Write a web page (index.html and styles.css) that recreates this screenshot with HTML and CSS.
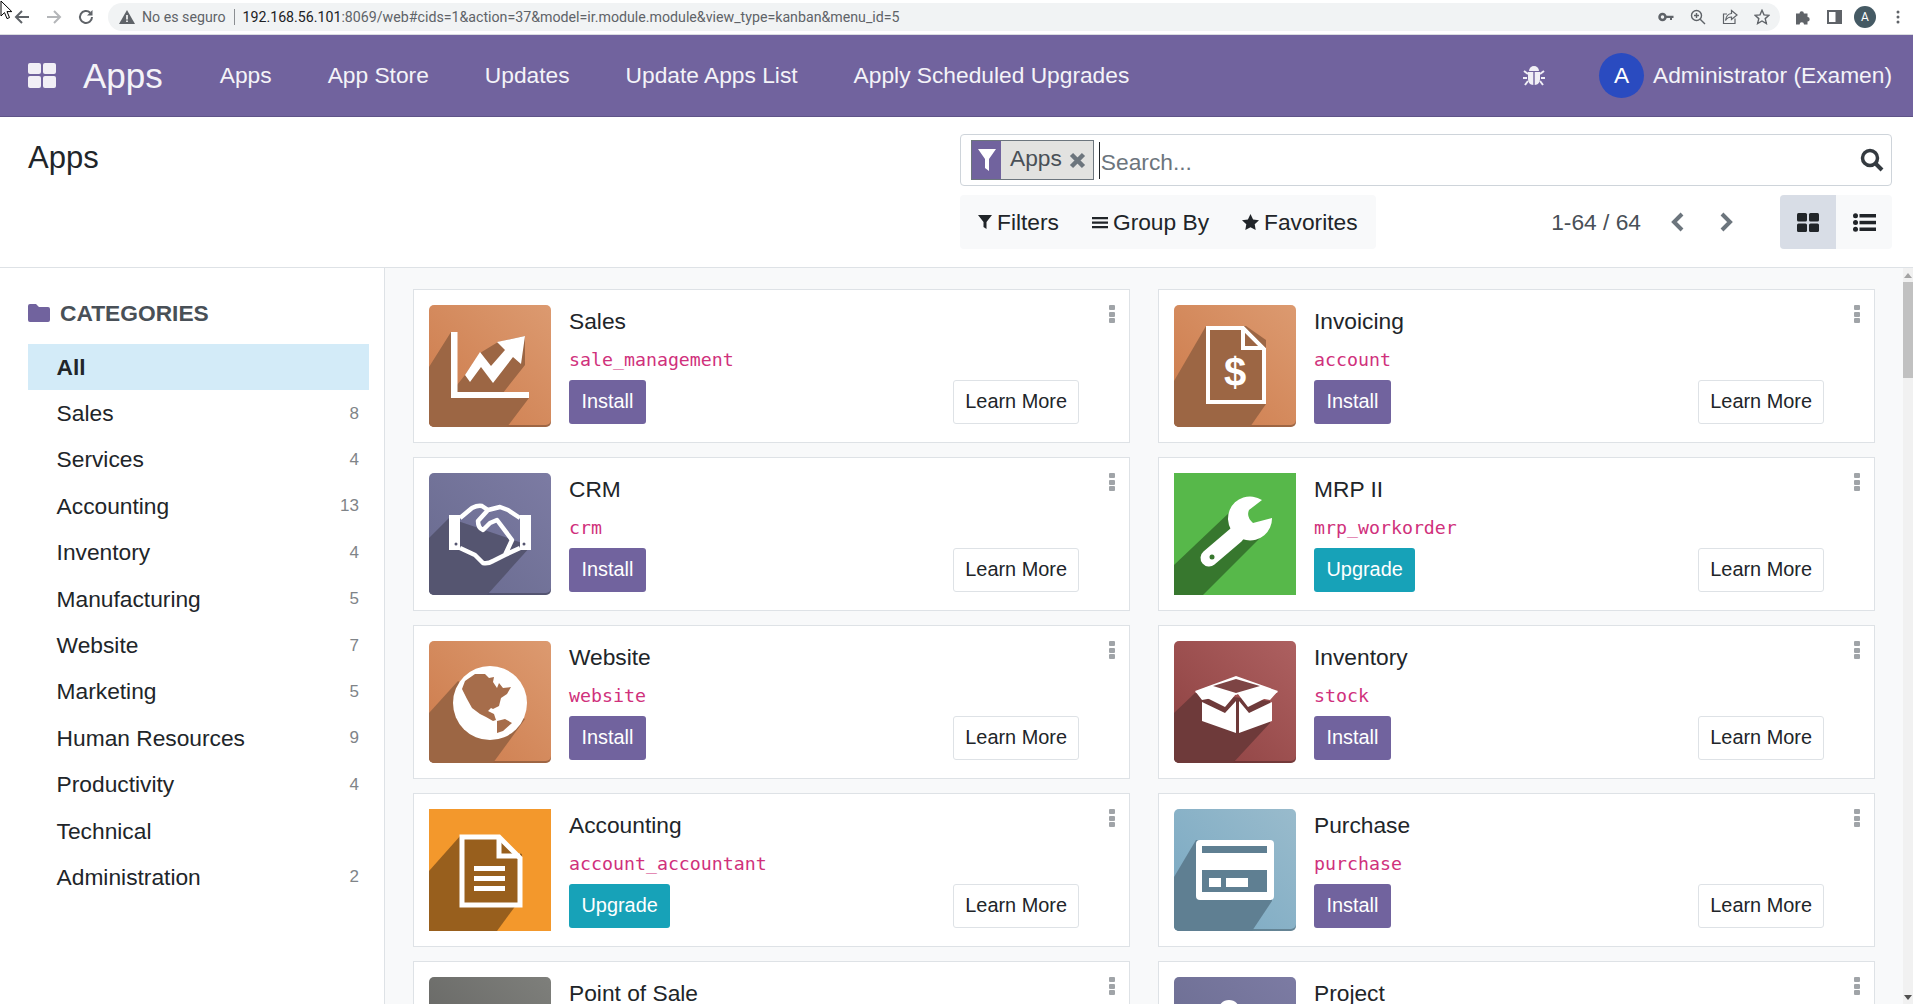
FILE: index.html
```html
<!DOCTYPE html>
<html lang="en">
  <head>
    <meta charset="UTF-8" />
    <title>Apps - Odoo</title>
    <link rel="stylesheet" href="styles.css">
  </head>
  <body>
    <svg class="mouse-cursor" width="12" height="20" viewBox="0 0 12 20"><path d="M1 1v15l3.500-3.400 2.500 6 2.500-1-2.500-6h4.800z" fill="#fff" stroke="#000" stroke-width="1"/></svg>

    <!-- browser toolbar -->
    <div class="browser-bar">
      <div class="browser-nav">
        <svg width="18" height="18" viewBox="0 0 18 18"><path d="M16 9H3M9 3L3 9l6 6" fill="none" stroke="#5f6368" stroke-width="2"/></svg>
        <svg width="18" height="18" viewBox="0 0 18 18"><path d="M2 9h13M9 3l6 6-6 6" fill="none" stroke="#b4b6b9" stroke-width="2"/></svg>
        <svg width="18" height="18" viewBox="0 0 18 18"><path d="M15 9a6 6 0 1 1-1.800-4.300" fill="none" stroke="#5f6368" stroke-width="2"/><path d="M15.500 2v5.500H10z" fill="#5f6368"/></svg>
      </div>
      <div class="address-bar">
        <svg class="warn-icon" width="16" height="14" viewBox="0 0 16 14"><path d="M8 0l8 14H0z" fill="#5f6368"/><path d="M7.200 5h1.600v4.500H7.200zM7.200 10.500h1.600V12H7.200z" fill="#fff"/></svg>
        <span class="not-secure">No es seguro</span>
        <span class="address-sep"></span>
        <span class="url"><b>192.168.56.101</b>:8069/web#cids=1&amp;action=37&amp;model=ir.module.module&amp;view_type=kanban&amp;menu_id=5</span>
        <div class="address-icons">
          <svg width="16" height="16" viewBox="0 0 16 16"><circle cx="4.500" cy="8" r="3" fill="none" stroke="#5f6368" stroke-width="2.500"/><path d="M7 6.800h8.500v2.200h-1.500v2h-2V9H7z" fill="#5f6368"/></svg>
          <svg width="16" height="16" viewBox="0 0 16 16"><circle cx="6.500" cy="6.500" r="5" fill="none" stroke="#5f6368" stroke-width="1.400"/><path d="M10.200 10.200L15 15M4 6.500h5M6.500 4v5" fill="none" stroke="#5f6368" stroke-width="1.400"/></svg>
          <svg width="16" height="16" viewBox="0 0 16 16"><path d="M13 9.500V14.500H1.500V5H5" fill="none" stroke="#5f6368" stroke-width="1.200"/><path d="M9.500 1.500L15 6l-5.500 4.500V8C7 8 5 9 3.500 11.500 4 7.500 6 4.800 9.500 4.500z" fill="none" stroke="#5f6368" stroke-width="1.200"/></svg>
          <svg width="16" height="16" viewBox="0 0 16 16"><path d="M8 1.300l2 4.600 5 .4-3.800 3.300 1.200 4.900L8 12l-4.400 2.500 1.200-4.900L1 6.300l5-.4z" fill="none" stroke="#5f6368" stroke-width="1.400"/></svg>
        </div>
      </div>
      <div class="browser-actions">
        <svg width="16" height="16" viewBox="0 0 16 16"><path d="M1 4.500h3.500a2.200 2.200 0 1 1 4.400 0H12.500V8a2.200 2.200 0 1 1 0 4.400V15.500H9a2.200 2.200 0 1 0-4.400 0H1z" fill="#5f6368"/></svg>
        <svg width="15" height="14" viewBox="0 0 15 14"><path d="M0 0h15v14H0z" fill="#5f6368"/><path d="M2 2h6.500v10H2z" fill="#fff"/></svg>
        <span class="chrome-avatar">A</span>
        <svg width="4" height="14" viewBox="0 0 4 14"><circle cx="2" cy="2" r="1.500" fill="#5f6368"/><circle cx="2" cy="7" r="1.500" fill="#5f6368"/><circle cx="2" cy="12" r="1.500" fill="#5f6368"/></svg>
      </div>
    </div>

    <!-- odoo navbar -->
    <nav class="navbar">
      <svg class="apps-grid" width="28" height="25" viewBox="0 0 28 25"><rect width="13" height="11" rx="2"/><rect x="15" width="13" height="11" rx="2"/><rect y="13" width="13" height="12" rx="2"/><rect x="15" y="13" width="13" height="12" rx="2"/></svg>
      <span class="brand">Apps</span>
      <a class="nav-link">Apps</a>
      <a class="nav-link">App Store</a>
      <a class="nav-link">Updates</a>
      <a class="nav-link">Update Apps List</a>
      <a class="nav-link">Apply Scheduled Upgrades</a>
      <svg class="bug-icon" width="22" height="21" viewBox="0 0 22 21"><path d="M6 6a5 5 0 0 1 10 0z" fill="#f1eff6"/><path d="M5 7h5.300v13C7 20 5 17 5 14zM17 7h-5.300v13C15 20 17 17 17 14z" fill="#f1eff6"/><path d="M5 9L1 6M17 9l4-3M4 13H0M18 13h4M5 16l-3 4M17 16l3 4" stroke="#f1eff6" stroke-width="2"/></svg>
      <span class="user-avatar">A</span>
      <span class="user-name">Administrator (Examen)</span>
    </nav>

    <!-- control panel -->
    <div class="control-panel">
      <h1 class="page-title">Apps</h1>
      <div class="panel-right">
        <div class="search-box">
          <div class="facet">
            <span class="facet-icon"><svg width="18" height="24" viewBox="0 0 18 24"><path d="M0 1h18l-7 10v12l-4-3V11z" fill="#fff"/></svg></span>
            <span class="facet-label">Apps</span>
            <svg class="facet-close" width="17" height="17" viewBox="0 0 17 17"><path d="M2.500 2.500l12 12M14.500 2.500l-12 12" stroke="#6c757d" stroke-width="4.500"/></svg>
          </div>
          <span class="search-input">Search...</span>
          <svg class="search-icon" width="24" height="24" viewBox="0 0 24 24"><circle cx="10" cy="10" r="7.500" fill="none" stroke="#343a40" stroke-width="3.500"/><path d="M15.500 15.500L22 22" stroke="#343a40" stroke-width="4"/></svg>
        </div>
        <div class="panel-tools">
          <div class="filter-bar">
            <span class="filter-item"><svg width="14" height="16" viewBox="0 0 14 16"><path d="M0 1h14L8.500 8v7l-3-2V8z" fill="#212529"/></svg>Filters</span>
            <span class="filter-item"><svg width="16" height="14" viewBox="0 0 16 14"><path d="M0 2h16v2.200H0zM0 6.500h16v2.200H0zM0 11h16v2.200H0z" fill="#212529"/></svg>Group By</span>
            <span class="filter-item"><svg width="17" height="16" viewBox="0 0 17 16"><path d="M8.500 0l2.600 5.400 5.900.8-4.300 4.100 1 5.700-5.200-2.800L3.300 16l1-5.700L0 6.200l5.900-.8z" fill="#212529"/></svg>Favorites</span>
          </div>
          <span class="pager-text">1-64 / 64</span>
          <svg class="pager-arrow" width="15" height="20" viewBox="0 0 15 20"><path d="M12 2L4 10l8 8" fill="none" stroke="#6c757d" stroke-width="4"/></svg>
          <svg class="pager-arrow" width="15" height="20" viewBox="0 0 15 20"><path d="M3 2l8 8-8 8" fill="none" stroke="#6c757d" stroke-width="4"/></svg>
          <div class="view-switch">
            <span class="view-btn active"><svg width="22" height="19" viewBox="0 0 22 19"><rect width="10" height="8.500" rx="1.500"/><rect x="12" width="10" height="8.500" rx="1.500"/><rect y="10.500" width="10" height="8.500" rx="1.500"/><rect x="12" y="10.500" width="10" height="8.500" rx="1.500"/></svg></span>
            <span class="view-btn"><svg width="23" height="19" viewBox="0 0 23 19"><circle cx="2.500" cy="2.800" r="2.500"/><circle cx="2.500" cy="9.500" r="2.500"/><circle cx="2.500" cy="16.200" r="2.500"/><rect x="6.500" y="1" width="16.500" height="3.500"/><rect x="6.500" y="7.800" width="16.500" height="3.500"/><rect x="6.500" y="14.500" width="16.500" height="3.500"/></svg></span>
          </div>
        </div>
      </div>
    </div>

    <div class="content">
      <aside class="sidebar">
        <div class="side-header">
          <svg width="22" height="18" viewBox="0 0 22 18"><path d="M0 2a2 2 0 0 1 2-2h6l3 3h9a2 2 0 0 1 2 2v11a2 2 0 0 1-2 2H2a2 2 0 0 1-2-2z" fill="#71639e"/></svg>
          CATEGORIES
        </div>
        <ul class="cat-list">
          <li class="cat active">All</li>
          <li class="cat">Sales<span class="count">8</span></li>
          <li class="cat">Services<span class="count">4</span></li>
          <li class="cat">Accounting<span class="count">13</span></li>
          <li class="cat">Inventory<span class="count">4</span></li>
          <li class="cat">Manufacturing<span class="count">5</span></li>
          <li class="cat">Website<span class="count">7</span></li>
          <li class="cat">Marketing<span class="count">5</span></li>
          <li class="cat">Human Resources<span class="count">9</span></li>
          <li class="cat">Productivity<span class="count">4</span></li>
          <li class="cat">Technical</li>
          <li class="cat">Administration<span class="count">2</span></li>
        </ul>
      </aside>

      <main class="kanban">
        <div class="card">
          <div class="app-icon orange">
            <svg viewBox="0 0 122 122"><path d="M22 27L0 62v60h78l22-29H28V80l8-10 15-22 18-11 27-6v29L70 93H28z" fill="#9c6644"/><path d="M22 27h6.500v60H100v6H22z" fill="#fff"/><path d="M36 70l15-23 11 14 14-16-8-8 28-6-4 28-8-7-20 26-12-16-11 15z" fill="#fff"/></svg>
          </div>
          <div class="card-body">
            <h4 class="app-name">Sales</h4>
            <code class="app-tech">sale_management</code>
            <div class="card-actions"><button class="btn install">Install</button><button class="btn learn">Learn More</button></div>
          </div>
          <span class="card-menu"></span>
        </div>

        <div class="card">
          <div class="app-icon orange">
            <svg viewBox="0 0 122 122"><path d="M32 21L0 76v46h76l16-23V35L72 21z" fill="#9c6644"/><path d="M34 23h35l21 21v53H34z" fill="none" stroke="#fff" stroke-width="4"/><path d="M69 23v20h21" fill="none" stroke="#fff" stroke-width="4"/><text class="icon-dollar" x="61" y="81">$</text></svg>
          </div>
          <div class="card-body">
            <h4 class="app-name">Invoicing</h4>
            <code class="app-tech">account</code>
            <div class="card-actions"><button class="btn install">Install</button><button class="btn learn">Learn More</button></div>
          </div>
          <span class="card-menu"></span>
        </div>

        <div class="card">
          <div class="app-icon slate">
            <svg viewBox="0 0 122 122"><path d="M20 45L0 65v57h58l44-49z" fill="#555570"/><path d="M31 45l12-10q6-3 10-2l6 4 12-3 8 3 12 8M31 75l15 7 8 8q5 1 10-2l12-6 15-7M59 37L49 48q0 7 5 9l7-7 7-3 15 20-7 15" fill="none" stroke="#fff" stroke-width="4.500" stroke-linejoin="round"/><path d="M20 42h11v35H20zM91 42h11v35H91z" fill="#fff"/><circle cx="27" cy="71" r="1.500" fill="#555570"/><circle cx="95" cy="71" r="1.500" fill="#555570"/></svg>
          </div>
          <div class="card-body">
            <h4 class="app-name">CRM</h4>
            <code class="app-tech">crm</code>
            <div class="card-actions"><button class="btn install">Install</button><button class="btn learn">Learn More</button></div>
          </div>
          <span class="card-menu"></span>
        </div>

        <div class="card">
          <div class="app-icon green">
            <svg viewBox="0 0 122 122"><path d="M58 37L0 92v30h29l60-60z" fill="#37772e"/><path d="M62 62L35 85" stroke="#fff" stroke-width="17" stroke-linecap="round"/><path d="M88 27L75 37q-3 7 4 13l19-5A22 22 0 1 1 88 27z" fill="#fff"/><circle cx="38" cy="84" r="2.500" fill="#37772e"/></svg>
          </div>
          <div class="card-body">
            <h4 class="app-name">MRP II</h4>
            <code class="app-tech">mrp_workorder</code>
            <div class="card-actions"><button class="btn upgrade">Upgrade</button><button class="btn learn">Learn More</button></div>
          </div>
          <span class="card-menu"></span>
        </div>

        <div class="card">
          <div class="app-icon orange">
            <svg viewBox="0 0 122 122"><path d="M29 40L0 72v50h64l32-44z" fill="#9c6644"/><circle cx="61" cy="62" r="37" fill="#fff"/><path d="M36 40l10-7h10l4 4 5-1-1 5 4 6 2-5 4 5 8-1-4 7-6 4-2 8-6 3-2-1-3 3 6 3 2 6-3 1-7-4-6-3-8-6-5-9-5-10zM68 80l8-2 7 4-9 8-6 2z" fill="#a66d4b"/></svg>
          </div>
          <div class="card-body">
            <h4 class="app-name">Website</h4>
            <code class="app-tech">website</code>
            <div class="card-actions"><button class="btn install">Install</button><button class="btn learn">Learn More</button></div>
          </div>
          <span class="card-menu"></span>
        </div>

        <div class="card">
          <div class="app-icon maroon">
            <svg viewBox="0 0 122 122"><path d="M21 52L0 72v50h59l37-40V60z" fill="#6e3a3a"/><path d="M21 50l41-15 42 15-8 9-32-6-2 1-2-1-32 6z" fill="#fff"/><path d="M21 51l15-6 26 8-11 13zM104 51l-16-6-24 8 10 13z" fill="#fff"/><path d="M39 45l23-7 24 7-24 7z" fill="#7d4444"/><path d="M28 61l23 11 11-12v32L28 80zM98 61L75 72 65 60v32l33-12z" fill="#fff"/></svg>
          </div>
          <div class="card-body">
            <h4 class="app-name">Inventory</h4>
            <code class="app-tech">stock</code>
            <div class="card-actions"><button class="btn install">Install</button><button class="btn learn">Learn More</button></div>
          </div>
          <span class="card-menu"></span>
        </div>

        <div class="card">
          <div class="app-icon amber">
            <svg viewBox="0 0 122 122"><path d="M32 26L0 62v60h68l25-34V45z" fill="#985f1d"/><path d="M33 28h37l21 21v47H33z" fill="#985f1d" stroke="#fff" stroke-width="5"/><path d="M70 28v19h21" fill="none" stroke="#fff" stroke-width="5"/><path d="M45 57h31v5H45zM45 67h31v5H45zM45 77h31v5H45z" fill="#fff"/></svg>
          </div>
          <div class="card-body">
            <h4 class="app-name">Accounting</h4>
            <code class="app-tech">account_accountant</code>
            <div class="card-actions"><button class="btn upgrade">Upgrade</button><button class="btn learn">Learn More</button></div>
          </div>
          <span class="card-menu"></span>
        </div>

        <div class="card">
          <div class="app-icon steel">
            <svg viewBox="0 0 122 122"><path d="M22 31L0 68v54h78l20-30V40z" fill="#5f7f92"/><rect x="22" y="31" width="78" height="60" rx="4" fill="#fff"/><path d="M28 37h65v7H28zM28 61h65v22H28z" fill="#5f7f92"/><path d="M35 69h12v9H35zM52 69h22v9H52z" fill="#fff"/></svg>
          </div>
          <div class="card-body">
            <h4 class="app-name">Purchase</h4>
            <code class="app-tech">purchase</code>
            <div class="card-actions"><button class="btn install">Install</button><button class="btn learn">Learn More</button></div>
          </div>
          <span class="card-menu"></span>
        </div>

        <div class="card">
          <div class="app-icon grey"></div>
          <div class="card-body">
            <h4 class="app-name">Point of Sale</h4>
            <code class="app-tech">point_of_sale</code>
            <div class="card-actions"><button class="btn install">Install</button><button class="btn learn">Learn More</button></div>
          </div>
          <span class="card-menu"></span>
        </div>

        <div class="card">
          <div class="app-icon slate">
            <svg viewBox="0 0 122 122"><circle cx="55" cy="34" r="11" fill="#fff"/></svg>
          </div>
          <div class="card-body">
            <h4 class="app-name">Project</h4>
            <code class="app-tech">project</code>
            <div class="card-actions"><button class="btn install">Install</button><button class="btn learn">Learn More</button></div>
          </div>
          <span class="card-menu"></span>
        </div>
      </main>

      <div class="scrollbar">
        <span class="scroll-up"></span>
        <span class="scroll-thumb"></span>
        <span class="scroll-down"></span>
      </div>
    </div>
  </body>
</html>
```

FILE: styles.css
```css
html,
body {
  height: 100%;
}

body {
  margin: 0;
  overflow: hidden;
  display: flex;
  flex-direction: column;
  font-family: "Liberation Sans", Arial, sans-serif;
  font-size: 22.75px;
  color: #212529;
  background: #fff;
}

.mouse-cursor {
  position: absolute;
  left: 0;
  top: 0;
  z-index: 5;
}

/* browser toolbar */
.browser-bar {
  height: 35px;
  flex: none;
  box-sizing: border-box;
  display: flex;
  align-items: center;
  padding-bottom: 3px;
  padding-top: 2px;
  border-bottom: 1px solid #dadce0;
  font-family: Roboto, sans-serif;
  font-size: 14.200px;
}

.browser-nav {
  width: 108px;
  flex: none;
  box-sizing: border-box;
  display: flex;
  align-items: center;
  gap: 14px;
  padding-left: 13px;
}

.address-bar {
  width: 1672px;
  height: 28px;
  flex: none;
  box-sizing: border-box;
  display: flex;
  align-items: center;
  padding: 0 10px 0 11px;
  border-radius: 14px;
  background: #f1f3f4;
}

.not-secure {
  margin-left: 7px;
  color: #5f6368;
}

.address-sep {
  width: 1px;
  height: 16px;
  margin: 0 8px;
  background: #8b8e92;
}

.url {
  color: #5f6368;
}

.url b {
  font-weight: 400;
  color: #202124;
}

.address-icons {
  margin-left: auto;
  display: flex;
  align-items: center;
  gap: 16px;
}

.browser-actions {
  flex: 1;
  display: flex;
  align-items: center;
  gap: 16px;
  padding-left: 15px;
}

.chrome-avatar {
  width: 22px;
  height: 22px;
  margin-left: -4px;
  margin-right: 4px;
  display: flex;
  align-items: center;
  justify-content: center;
  border-radius: 50%;
  background: #455a64;
  color: #fff;
  font-size: 12px;
}

/* navbar */
.navbar {
  height: 82px;
  flex: none;
  box-sizing: border-box;
  display: flex;
  align-items: center;
  padding: 0 21px 0 28px;
  border-bottom: 1px solid #5f5488;
  background: #71639e;
  color: #f4f3f8;
}

.apps-grid {
  fill: #f1eff6;
  margin-right: 27px;
}

.brand {
  font-size: 35px;
  margin-right: 29px;
}

.nav-link {
  padding: 0 28px;
}

.bug-icon {
  margin-left: auto;
  margin-right: 54px;
}

.user-avatar {
  width: 45px;
  height: 45px;
  display: flex;
  align-items: center;
  justify-content: center;
  border-radius: 50%;
  background: #2a4bc0;
  color: #fff;
}

.user-name {
  margin-left: 9px;
}

/* control panel */
.control-panel {
  height: 151px;
  flex: none;
  box-sizing: border-box;
  display: flex;
  padding: 17px 21px 0 28px;
  border-bottom: 1px solid #dee2e6;
}

.page-title {
  flex: 1;
  margin: 5px 0 0;
  font-size: 31px;
  line-height: 38px;
  font-weight: 400;
}

.panel-right {
  width: 932px;
}

.search-box {
  height: 52px;
  box-sizing: border-box;
  display: flex;
  align-items: center;
  padding: 0 7px 0 10px;
  border: 1px solid #ced4da;
  border-radius: 4px;
}

.facet {
  height: 40px;
  box-sizing: border-box;
  display: flex;
  align-items: center;
  border: 1px solid #6c757d;
  background: #e2e2e0;
  color: #495057;
}

.facet-icon {
  width: 29px;
  height: 38px;
  display: flex;
  align-items: center;
  justify-content: center;
  background: #71639e;
}

.facet-label {
  margin-left: 9px;
  line-height: 34px;
  margin-bottom: 4px;
}

.facet-close {
  margin: 0 7px;
}

.search-input {
  margin-left: 5px;
  padding-left: 1px;
  padding-top: 3px;
  border-left: 1px solid #212529;
  line-height: 34px;
  color: #6c757d;
}

.search-icon {
  margin-left: auto;
}

.panel-tools {
  margin-top: 9px;
  display: flex;
  align-items: center;
}

.filter-bar {
  height: 54px;
  display: flex;
  align-items: center;
  gap: 33px;
  padding: 0 18px;
  border-radius: 4px;
  background: #f8f9fa;
}

.filter-item {
  display: flex;
  align-items: center;
  gap: 5px;
}

.pager-text {
  margin-left: auto;
  color: #495057;
}

.pager-arrow {
  margin-left: 29px;
}

.pager-arrow:last-of-type {
  margin-left: 34px;
  margin-right: 46px;
}

.view-switch {
  height: 54px;
  display: flex;
  border-radius: 4px;
  overflow: hidden;
  background: #f8f9fa;
}

.view-btn {
  width: 56px;
  display: flex;
  align-items: center;
  justify-content: center;
  fill: #212529;
}

.view-btn.active {
  background: #d8dde6;
}

/* body */
.content {
  flex: 1;
  min-height: 0;
  display: flex;
  overflow: hidden;
}

.sidebar {
  width: 385px;
  flex: none;
  box-sizing: border-box;
  padding: 29px 15px 0 28px;
  border-right: 1px solid #dee2e6;
}

.side-header {
  height: 32px;
  margin-bottom: 15px;
  display: flex;
  align-items: center;
  gap: 10px;
  font-weight: 700;
  color: #495057;
}

.cat-list {
  margin: 0;
  padding: 0;
  list-style: none;
}

.cat {
  height: 46.400px;
  display: flex;
  align-items: center;
  justify-content: space-between;
  padding: 0 10px 0 28.600px;
}

.cat.active {
  background: #d3ebf8;
  font-weight: 700;
}

.count {
  font-size: 17px;
  color: #7f8488;
}

.kanban {
  flex: 1;
  min-width: 0;
  display: grid;
  grid-template-columns: 1fr 1fr;
  grid-auto-rows: 154px;
  gap: 14px 28px;
  padding: 21px 28px 0;
  background: #f8f9fa;
  overflow: hidden;
}

.card {
  position: relative;
  box-sizing: border-box;
  display: flex;
  padding: 15px;
  border: 1px solid #dee2e6;
  background: #fff;
}

.app-icon {
  width: 122px;
  height: 122px;
  flex: none;
  overflow: hidden;
  border-radius: 5px;
  box-shadow: inset 0 -2px 0 rgba(0, 0, 0, 0.25);
}

.app-icon svg {
  display: block;
  width: 122px;
  height: 122px;
}

.icon-dollar {
  font-size: 40px;
  font-weight: 700;
  fill: #fff;
  text-anchor: middle;
}

.orange {
  background: linear-gradient(to top right, #cc7a4a, #dc9a70);
}

.slate {
  background: linear-gradient(to top right, #686a8e, #7c7ba3);
}

.maroon {
  background: linear-gradient(to top right, #8c4040, #ad6060);
}

.steel {
  background: linear-gradient(to top right, #78a8c2, #99bbcc);
}

.grey {
  background: linear-gradient(to top right, #60605e, #7e7f7b);
}

.green {
  background: #57b84a;
  border-radius: 0;
  box-shadow: none;
}

.amber {
  background: #f3982c;
  border-radius: 0;
  box-shadow: none;
}

.card-body {
  flex: 1;
  margin-left: 18px;
  margin-right: 35px;
}

.app-name {
  margin: 0;
  font-size: 22.75px;
  line-height: 32px;
  font-weight: 400;
}

.app-tech {
  display: block;
  margin-top: 8px;
  font-family: "DejaVu Sans Mono", monospace;
  font-size: 18.250px;
  line-height: 30px;
  color: #d0317c;
}

.card-actions {
  margin-top: 5px;
  display: flex;
  justify-content: space-between;
}

.btn {
  height: 44px;
  padding: 0 12.500px 1px;
  font-family: inherit;
  font-size: 19.900px;
  border: none;
  border-radius: 3px;
  color: #fff;
}

.btn.install {
  background: #71639e;
}

.btn.upgrade {
  background: #17a2b8;
}

.btn.learn {
  padding: 0 11px 1px;
  border: 1px solid #dee2e6;
  background: #fff;
  color: #212529;
}

.card-menu {
  position: absolute;
  right: 14px;
  top: 15px;
  width: 6px;
  height: 5px;
  border-radius: 1px;
  background: #a0a4a8;
  box-shadow: 0 7px 0 #a0a4a8, 0 13px 0 #a0a4a8;
}

.scrollbar {
  width: 10px;
  flex: none;
  display: flex;
  flex-direction: column;
  background: #f1f1f1;
}

.scroll-up {
  margin: 5px auto 4px;
  border: 4px solid transparent;
  border-top: none;
  border-bottom: 5px solid #a3a3a3;
}

.scroll-thumb {
  height: 96px;
  background: #c1c1c1;
}

.scroll-down {
  margin: auto auto 4px;
  border: 4px solid transparent;
  border-bottom: none;
  border-top: 5px solid #505050;
}
```
